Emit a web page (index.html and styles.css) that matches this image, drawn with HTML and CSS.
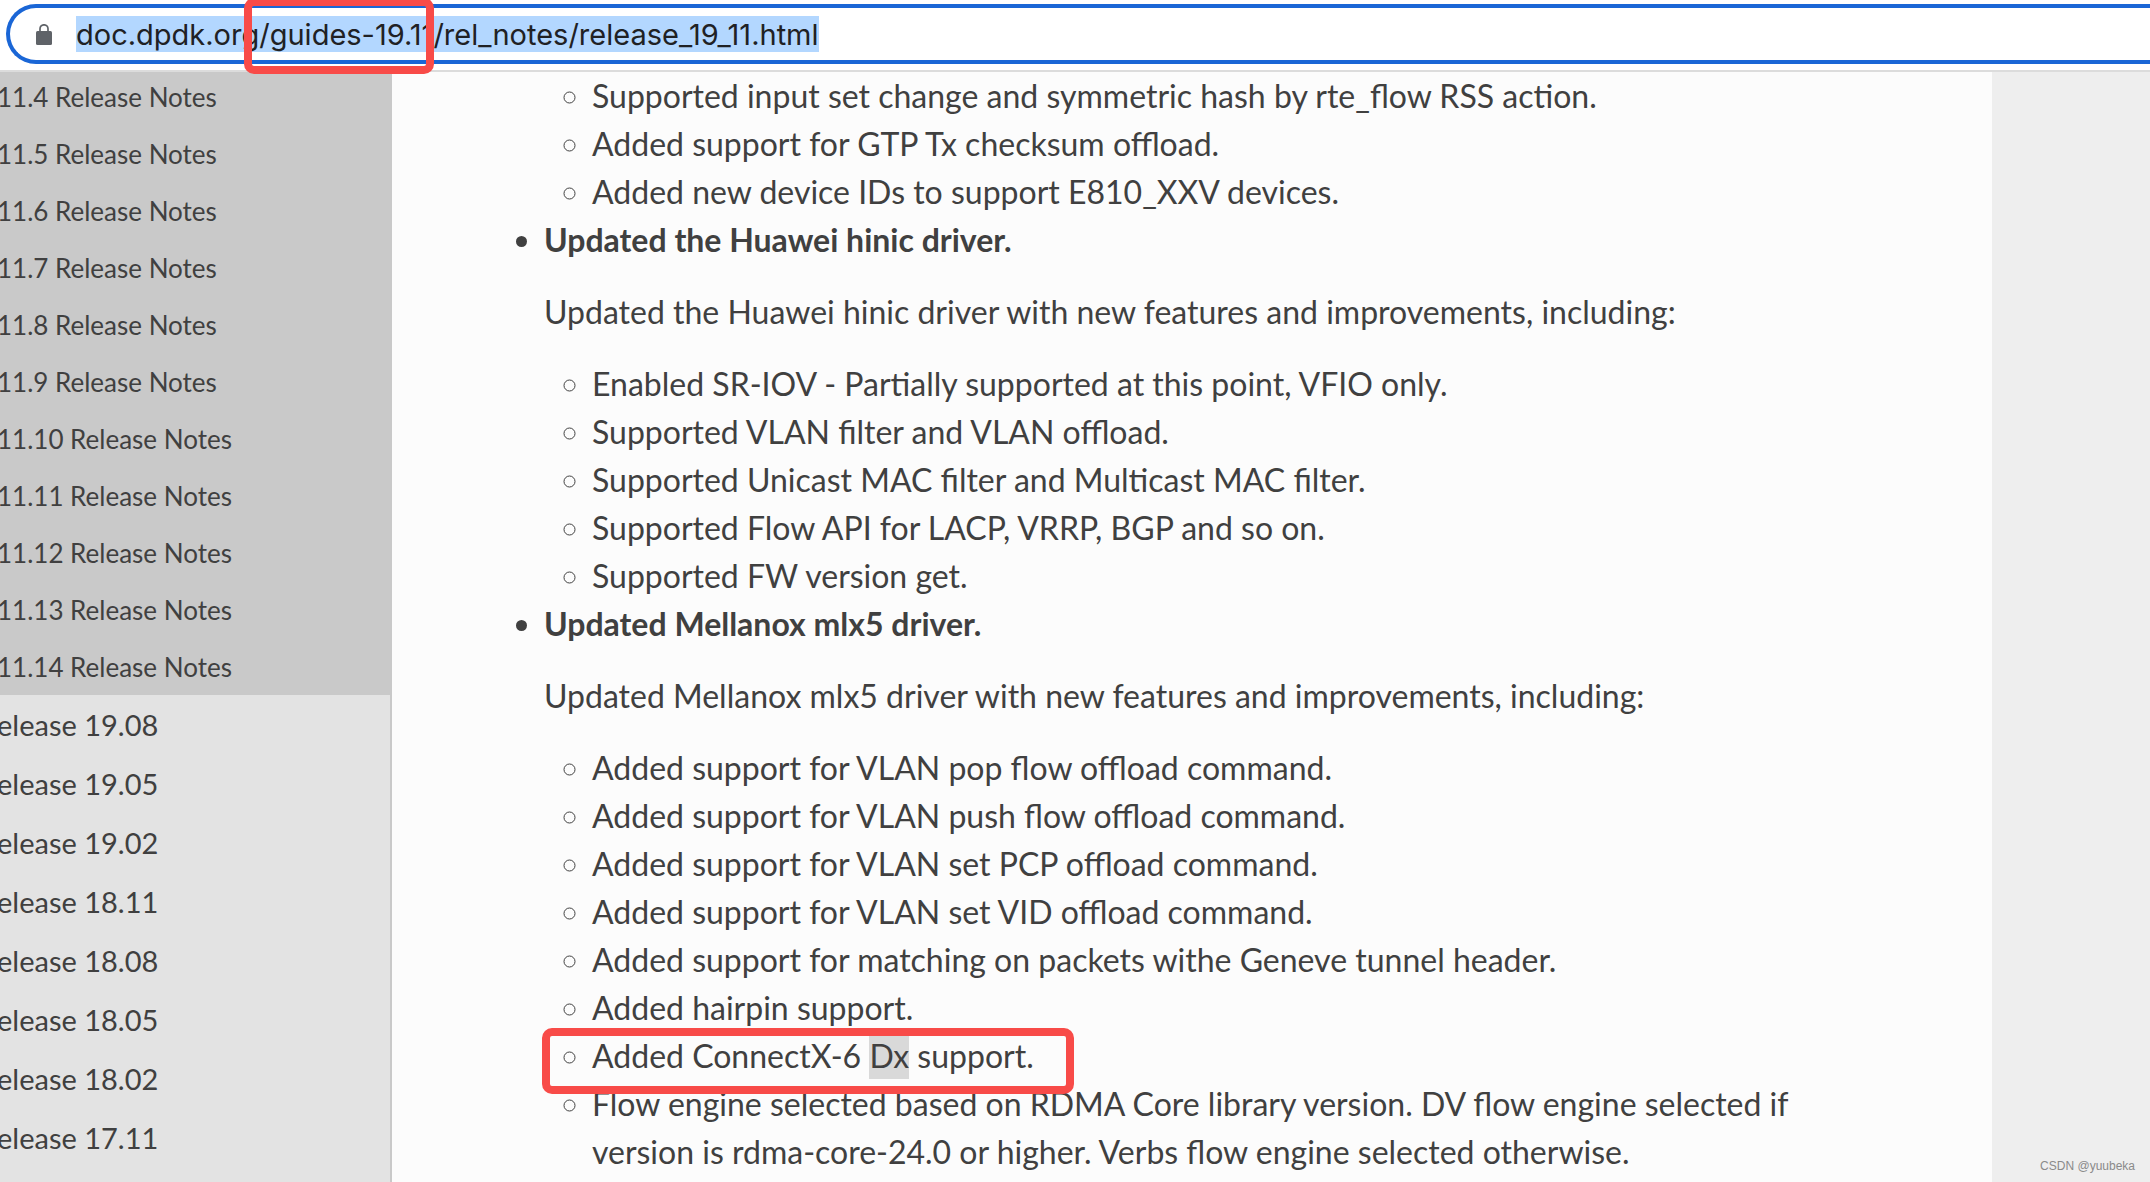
FILE: index.html
```html
<!DOCTYPE html>
<html lang="en">
<head>
<meta charset="utf-8">
<title>DPDK Release 19.11</title>
<link rel="stylesheet" href="styles.css">
</head>
<body>
<header class="toolbar">
  <div class="omnibox">
    <svg class="lock" viewBox="0 0 16 21" aria-hidden="true">
      <path d="M4 8V4.800a4 4 0 0 1 8 0V8" fill="none" stroke="#5f6368" stroke-width="1.700"/>
      <rect x="0" y="7" width="16" height="14" rx="1.500" fill="#5f6368"/>
    </svg>
    <input class="url" type="text" aria-label="Address" size="44" value="doc.dpdk.org/guides-19.11/rel_notes/release_19_11.html">
  </div>
  <span class="mark mark-url"></span>
</header>
<div class="page">
  <nav class="sidebar" aria-label="Releases">
    <ul class="notes">
      <li><a href="#">11.4 Release Notes</a></li>
      <li><a href="#">11.5 Release Notes</a></li>
      <li><a href="#">11.6 Release Notes</a></li>
      <li><a href="#">11.7 Release Notes</a></li>
      <li><a href="#">11.8 Release Notes</a></li>
      <li><a href="#">11.9 Release Notes</a></li>
      <li><a href="#">11.10 Release Notes</a></li>
      <li><a href="#">11.11 Release Notes</a></li>
      <li><a href="#">11.12 Release Notes</a></li>
      <li><a href="#">11.13 Release Notes</a></li>
      <li><a href="#">11.14 Release Notes</a></li>
    </ul>
    <ul class="releases">
      <li><a href="#">elease 19.08</a></li>
      <li><a href="#">elease 19.05</a></li>
      <li><a href="#">elease 19.02</a></li>
      <li><a href="#">elease 18.11</a></li>
      <li><a href="#">elease 18.08</a></li>
      <li><a href="#">elease 18.05</a></li>
      <li><a href="#">elease 18.02</a></li>
      <li><a href="#">elease 17.11</a></li>
    </ul>
  </nav>
  <main class="content">
    <ul class="drivers">
      <li class="continued">
        <ul class="features">
          <li>Supported input set change and symmetric hash by rte_flow RSS action.</li>
          <li>Added support for GTP Tx checksum offload.</li>
          <li>Added new device IDs to support E810_XXV devices.</li>
        </ul>
      </li>
      <li>
        <strong>Updated the Huawei hinic driver.</strong>
        <p>Updated the Huawei hinic driver with new features and improvements, including:</p>
        <ul class="features">
          <li>Enabled SR-IOV - Partially supported at this point, VFIO only.</li>
          <li>Supported VLAN filter and VLAN offload.</li>
          <li>Supported Unicast MAC filter and Multicast MAC filter.</li>
          <li>Supported Flow API for LACP, VRRP, BGP and so on.</li>
          <li>Supported FW version get.</li>
        </ul>
      </li>
      <li>
        <strong>Updated Mellanox mlx5 driver.</strong>
        <p>Updated Mellanox mlx5 driver with new features and improvements, including:</p>
        <ul class="features">
          <li>Added support for VLAN pop flow offload command.</li>
          <li>Added support for VLAN push flow offload command.</li>
          <li>Added support for VLAN set PCP offload command.</li>
          <li>Added support for VLAN set VID offload command.</li>
          <li>Added support for matching on packets withe Geneve tunnel header.</li>
          <li>Added hairpin support.</li>
          <li class="marked">Added ConnectX-6 <span class="found">Dx</span> support.<span class="mark mark-item"></span></li>
          <li>Flow engine selected based on RDMA Core library version. DV flow engine selected if version is rdma-core-24.0 or higher. Verbs flow engine selected otherwise.</li>
        </ul>
      </li>
    </ul>
  </main>
</div>
<div class="watermark">CSDN @yuubeka</div>
</body>
</html>
```
FILE: styles.css
```css
* { box-sizing: border-box; }

body {
  margin: 0;
  height: 100vh;
  display: flex;
  flex-direction: column;
  overflow: hidden;
  background: #eeeeee;
  color: #404040;
  font-family: Lato, "Liberation Sans", sans-serif;
  font-size: 32px;
  line-height: 48px;
}

ul { margin: 0; padding: 0; }

/* Address bar */
.toolbar {
  position: relative;
  z-index: 1;
  flex: none;
  padding: 4px 0 6px 6px;
  background: #ffffff;
  border-bottom: 2px solid #dcdcdc;
}
.omnibox {
  display: flex;
  align-items: center;
  gap: 24px;
  height: 60px;
  padding-left: 26px;
  border: 4px solid #1a66d6;
  border-right: 0;
  border-radius: 30px 0 0 30px;
}
.lock { width: 16px; height: 21px; }
.url {
  field-sizing: content;
  height: 36px;
  padding: 0;
  border: 0;
  outline: 0;
  background: #b3d7ff;
  color: #202124;
  font-family: Inter, "Liberation Sans", sans-serif;
  font-size: 29px;
}

/* Red annotation frames */
.mark {
  position: absolute;
  border: 8px solid #f84b48;
  border-radius: 10px;
}
.mark-url { left: 244px; top: -2px; width: 190px; height: 76px; }
.marked { position: relative; }
.mark-item { left: -50px; top: -4px; width: 532px; height: 66px; }

/* Page */
.page { flex: 1; display: flex; min-height: 0; }

.sidebar {
  flex: none;
  width: 392px;
  overflow: hidden;
  background: #e3e3e3;
  border-right: 2px solid #c9c9c9;
}
.sidebar ul { list-style: none; }
.sidebar a {
  display: block;
  margin-left: -3px;
  color: #404040;
  text-decoration: none;
  white-space: nowrap;
}
.notes { margin-top: -4px; background: #c9c9c9; font-size: 26px; line-height: 55px; }
.notes a { padding-top: 2px; }
.releases { font-size: 29px; line-height: 59px; }

.content {
  flex: 1;
  max-width: 1600px;
  padding: 0 104px;
  overflow: hidden;
  background: #fcfcfc;
}
.content li { margin-left: 48px; }
.drivers { list-style: disc; }
.features { list-style: circle; }
.continued { list-style: none; }
.content p { margin: 24px 0; }
.found { padding-bottom: 4px; background: #d9d9d9; }

.watermark {
  position: absolute;
  right: 15px;
  bottom: 8px;
  color: #8a8a8a;
  font-family: "Liberation Sans", sans-serif;
  font-size: 12px;
  line-height: 16px;
}
```
